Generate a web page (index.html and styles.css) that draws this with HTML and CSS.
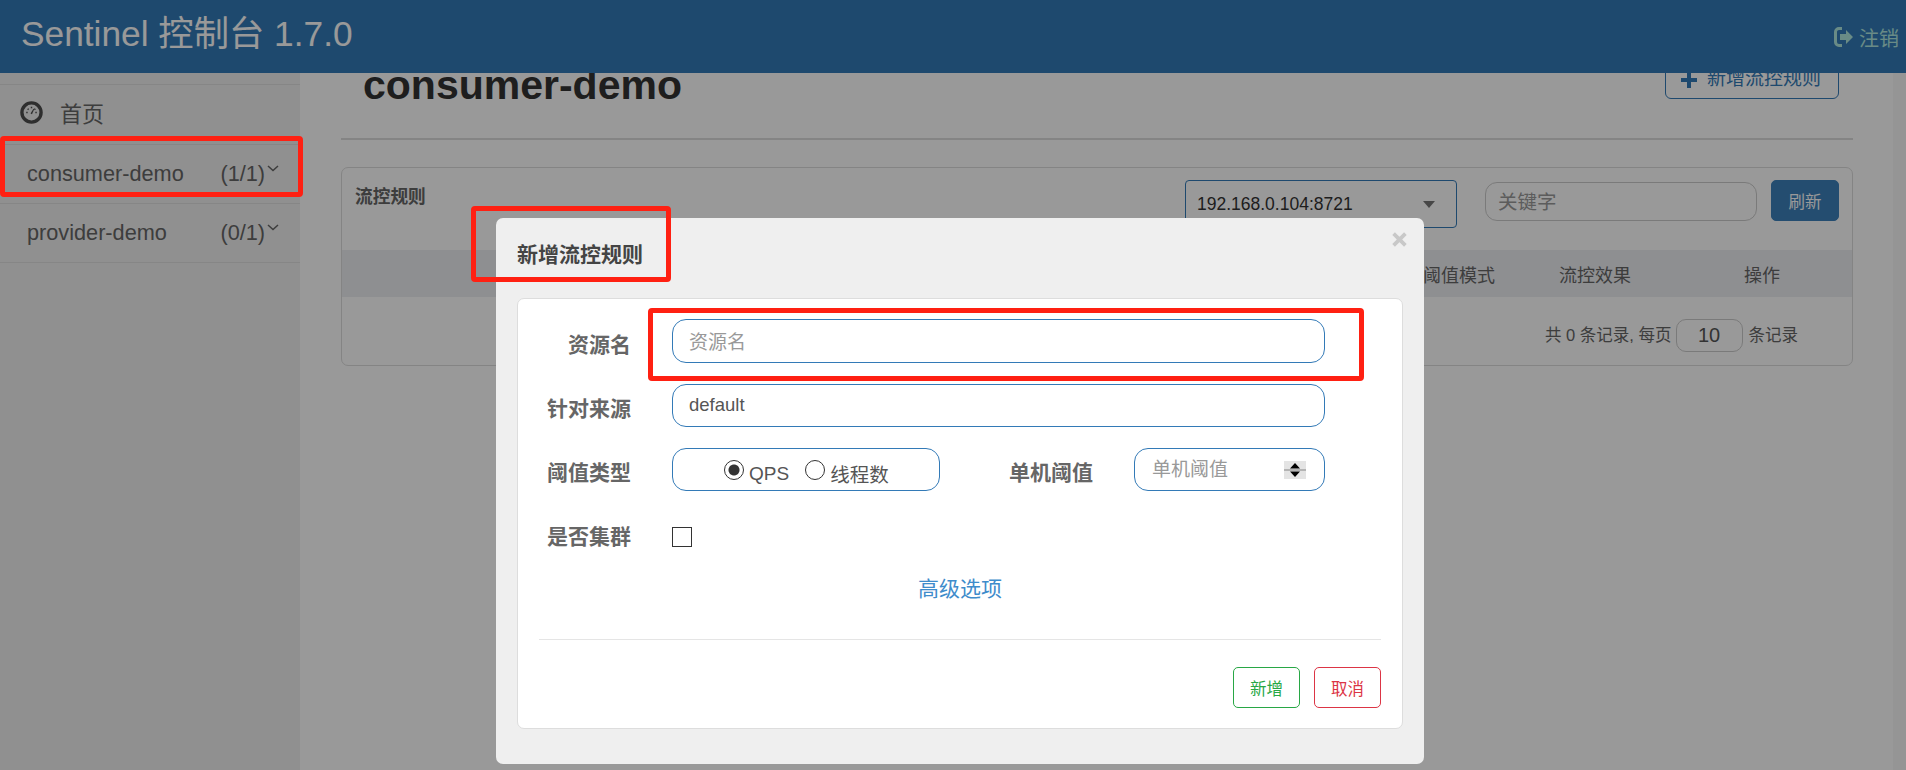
FILE: index.html
```html
<!DOCTYPE html>
<html lang="zh-CN">
<head>
  <meta charset="UTF-8" />
  <title>Sentinel 控制台</title>
  <link rel="stylesheet" href="styles.css">
</head>
<body>

  <!-- Top bar -->
  <header class="topbar">
    <span class="brand">Sentinel 控制台 1.7.0</span>
    <a class="logout">
      <svg class="logout-icon" viewBox="0 0 20 20"><path d="M8 1.500H5A3.500 3.500 0 0 0 1.500 5v10A3.500 3.500 0 0 0 5 18.500h3" fill="none" stroke="currentColor" stroke-width="3"/><path d="M6 7h6V3l7 7-7 7v-4H6z" fill="currentColor"/></svg>
      注销
    </a>
  </header>

  <div class="layout">
    <!-- Sidebar -->
    <aside class="sidebar">
      <div class="side-home">
        <svg class="home-icon" viewBox="0 0 24 24">
          <circle cx="12" cy="12" r="10" fill="none" stroke="currentColor" stroke-width="3.500"/>
          <path d="M6.500 12h1.500M8 8l1 1M12 6v1.500M16 8l-1 1M16 12h1.500" stroke="currentColor" stroke-width="1.500" fill="none"/>
          <path d="M11 13l3-5 .8.500-2.300 5.300z" fill="currentColor"/>
        </svg>
        <span>首页</span>
      </div>
      <div class="side-item">
        <span>consumer-demo</span>
        <span class="side-count">(1/1)<svg class="chevron" viewBox="0 0 12 7"><path d="M1 1l5 4.500L11 1" fill="none" stroke="currentColor" stroke-width="1.500"/></svg></span>
      </div>
      <div class="side-item">
        <span>provider-demo</span>
        <span class="side-count">(0/1)<svg class="chevron" viewBox="0 0 12 7"><path d="M1 1l5 4.500L11 1" fill="none" stroke="currentColor" stroke-width="1.500"/></svg></span>
      </div>
    </aside>

    <!-- Page behind the dialog -->
    <main class="content">
      <div class="page-head">
        <h1>consumer-demo</h1>
        <button class="add-btn">
          <svg class="plus-icon" viewBox="0 0 16 16"><path d="M6 0h4v6h6v4h-6v6H6v-6H0V6h6z" fill="currentColor"/></svg>
          新增流控规则
        </button>
      </div>

      <section class="panel">
        <div class="panel-bar">
          <span class="panel-title">流控规则</span>
          <div class="host-select">192.168.0.104:8721<i class="caret"></i></div>
          <input class="keyword" type="text" placeholder="关键字">
          <button class="refresh">刷新</button>
        </div>
        <div class="table-head">
          <span class="col-mode">阈值模式</span>
          <span class="col-effect">流控效果</span>
          <span class="col-ops">操作</span>
        </div>
        <div class="pager">
          <span class="pager-text">共 0 条记录, 每页</span>
          <input class="page-size" type="text" value="10">
          <span class="pager-text">条记录</span>
        </div>
      </section>
    </main>

    <div class="scroll-track"></div>
  </div>

  <!-- Add rule dialog -->
  <div class="backdrop">
    <div class="modal">
      <div class="modal-title">新增流控规则</div>
      <span class="close">
        <svg viewBox="0 0 14 14"><path d="M1.500 1.500l11 11M12.500 1.500l-11 11" stroke="currentColor" stroke-width="3.500" fill="none"/></svg>
      </span>
      <div class="card">
        <div class="row">
          <label class="field-label">资源名</label>
          <input class="field wide name-input" type="text" placeholder="资源名">
        </div>
        <div class="row row-2">
          <label class="field-label">针对来源</label>
          <input class="field wide" type="text" value="default">
        </div>
        <div class="row row-3">
          <label class="field-label">阈值类型</label>
          <div class="field radios">
            <input class="radio" type="radio" name="grade" checked><span class="radio-text">QPS</span>
            <input class="radio radio-second" type="radio" name="grade"><span class="radio-text radio-text-cn">线程数</span>
          </div>
          <label class="field-label label-count">单机阈值</label>
          <div class="field count">
            <input class="count-input" type="text" placeholder="单机阈值">
            <svg class="spinner" viewBox="0 0 22 18">
              <rect width="22" height="18" fill="#e4e4e4"/>
              <rect y="8" width="22" height="2" fill="#b4b4b4"/>
              <path d="M11 2l5 5.500H6zM11 16l-5-5.500h10z" fill="#000"/>
            </svg>
          </div>
        </div>
        <div class="row row-4">
          <label class="field-label">是否集群</label>
          <input class="check" type="checkbox">
        </div>
        <a class="advanced">高级选项</a>
        <div class="card-line"></div>
        <div class="actions">
          <button class="btn-ok">新增</button>
          <button class="btn-cancel">取消</button>
        </div>
      </div>
    </div>
  </div>

  <!-- Red annotation boxes drawn over the screenshot -->
  <div class="mark mark-menu"></div>
  <div class="mark mark-title"></div>
  <div class="mark mark-input"></div>

</body>
</html>
```

FILE: styles.css
```css
* {
  box-sizing: border-box;
}

html, body {
  height: 100%;
}

body {
  margin: 0;
  overflow: hidden;
  background: #fff;
  color: #333;
  font-family: "Liberation Sans", "Noto Sans CJK SC", sans-serif;
}

input, button {
  font-family: inherit;
}

/* top bar */
.topbar {
  position: fixed;
  top: 0;
  left: 0;
  right: 0;
  height: 73px;
  background: #337ab7;
  display: flex;
  justify-content: space-between;
  color: #fff;
  z-index: 1;
}

.brand {
  margin: 12px 0 0 21px;
  font-size: 35.300px;
  line-height: 44px;
}

.logout {
  display: flex;
  align-items: center;
  gap: 5px;
  height: 26px;
  margin: 24px 7px 0 0;
  font-size: 20px;
  color: #b0e8e0;
}

.logout-icon {
  width: 20px;
  height: 20px;
}

/* layout */
.layout {
  display: flex;
  height: 100%;
}

.sidebar {
  width: 300px;
  flex: none;
  padding-top: 84px;
  background: #f0f0f0;
  color: #666;
  font-size: 21.700px;
}

.side-home {
  height: 60px;
  border-top: 1px solid #e0e0e0;
  padding: 16px 0 0 20px;
  display: flex;
  align-items: flex-start;
  gap: 17px;
}

.home-icon {
  width: 23px;
  height: 23px;
  color: #4e4e4e;
}

.side-home span {
  line-height: 30px;
  font-size: 22px;
  margin-top: -1px;
}

.side-item {
  height: 59px;
  border-top: 1px solid #e0e0e0;
  padding: 13px 0 0 27px;
  display: flex;
  justify-content: space-between;
  line-height: 32px;
}

.side-item:last-child {
  border-bottom: 1px solid #e0e0e0;
  height: 60px;
}

.side-count {
  display: flex;
  margin-right: 21px;
}

.chevron {
  width: 12px;
  height: 7px;
  margin: 7px 0 0 2px;
}

/* page behind the dialog */
.content {
  flex: 1;
  min-width: 0;
  padding: 49px 40px 0 41px;
}

.scroll-track {
  width: 13px;
  flex: none;
  background: #f8f8f8;
}

.page-head {
  height: 91px;
  display: flex;
  justify-content: space-between;
  align-items: flex-start;
  border-bottom: 2px solid #ddd;
}

.page-head h1 {
  margin: 11px 0 0 22px;
  font-size: 41px;
  line-height: 50px;
  color: #333;
}

.add-btn {
  width: 174px;
  height: 50px;
  margin-right: 14px;
  padding: 17px 0 0 15px;
  display: flex;
  align-items: flex-start;
  gap: 10px;
  background: #fff;
  border: 1px solid #337ab7;
  border-radius: 6px;
  color: #337ab7;
  font-size: 19px;
  line-height: 24px;
}

.plus-icon {
  width: 16px;
  height: 16px;
  margin-top: 5px;
}

.panel {
  height: 199px;
  margin-top: 27px;
  border: 1px solid #ddd;
  border-radius: 7px;
}

.panel-bar {
  height: 82px;
  padding: 12px 13px 0 13px;
  display: flex;
  align-items: flex-start;
}

.panel-title {
  margin: 5px auto 0 0;
  font-size: 17.700px;
  font-weight: bold;
  line-height: 24px;
  color: #666;
}

.host-select {
  width: 272px;
  height: 48px;
  padding: 0 21px 0 11px;
  display: flex;
  align-items: center;
  justify-content: space-between;
  border: 1px solid #337ab7;
  border-radius: 4px;
  font-size: 17.500px;
  color: #333;
}

.caret {
  border-top: 7px solid #777;
  border-left: 6px solid transparent;
  border-right: 6px solid transparent;
}

.keyword {
  width: 272px;
  height: 39px;
  margin: 2px 0 0 28px;
  padding: 2px 12px 0;
  border: 1px solid #ccc;
  border-radius: 12px;
  font-size: 19.500px;
  outline: none;
}

.keyword::placeholder {
  color: #999;
}

.refresh {
  width: 68px;
  height: 41px;
  margin-left: 14px;
  background: #3d81bb;
  border: 1px solid #3d81bb;
  border-radius: 5px;
  color: #fff;
  font-size: 16.500px;
}

.table-head {
  height: 47px;
  background: #edeef2;
  display: flex;
  justify-content: flex-end;
  align-items: center;
  font-size: 18px;
  color: #666;
}

.table-head span {
  text-align: center;
}

.col-mode {
  width: 118px;
}

.col-effect {
  width: 154px;
}

.col-ops {
  width: 180px;
}

.pager {
  margin-top: 22px;
  padding-right: 54px;
  display: flex;
  justify-content: flex-end;
  align-items: center;
  gap: 5px;
  font-size: 16.500px;
  color: #666;
}

.pager-text {
  margin-bottom: 4px;
}

.page-size {
  width: 67px;
  height: 33px;
  margin: 0 1px 0 -1px;
  padding: 0;
  border: 1px solid #ccc;
  border-radius: 10px;
  text-align: center;
  font-size: 20px;
  color: #555;
}

/* dialog */
.backdrop {
  position: fixed;
  inset: 0;
  background: rgba(0, 0, 0, 0.4);
  padding: 218px 0 0 496px;
  z-index: 2;
}

.modal {
  position: relative;
  width: 928px;
  height: 546px;
  padding: 0 21px;
  background: #efefef;
  border-radius: 7px;
}

.modal-title {
  height: 80px;
  padding-top: 21px;
  font-size: 21px;
  font-weight: bold;
  line-height: 32px;
  color: #444;
}

.close {
  position: absolute;
  top: 14px;
  right: 17px;
  width: 15px;
  height: 15px;
  color: #c8c8c8;
}

.close svg {
  display: block;
}

.card {
  width: 886px;
  height: 431px;
  padding: 20px 21px 0 0;
  background: #fff;
  border: 1px solid #ddd;
  border-radius: 7px;
}

.row {
  display: flex;
  align-items: center;
  height: 44px;
}

.row-2,
.row-3 {
  height: 43px;
  margin-top: 21px;
}

.row-4 {
  height: 22px;
  margin-top: 35px;
}

.row-4 .field-label {
  padding-top: 0;
  margin-bottom: 5px;
}

.field-label {
  flex: none;
  width: 113px;
  margin-right: 41px;
  padding-top: 3px;
  text-align: right;
  font-size: 21px;
  font-weight: bold;
  color: #666;
}

.field {
  height: 100%;
  background: #fff;
  border: 1px solid #337ab7;
  border-radius: 14px;
  font-size: 18.500px;
  color: #555;
  outline: none;
}

.wide {
  width: 653px;
  padding: 0 16px 1px;
}

.name-input {
  padding: 3px 16px 0;
}

.wide::placeholder {
  font-size: 19px;
}

.field::placeholder,
.count-input::placeholder {
  color: #999;
}

.radios {
  width: 268px;
  padding-left: 51px;
  display: flex;
  align-items: center;
  font-size: 19px;
}

.radio {
  appearance: none;
  flex: none;
  width: 20px;
  height: 20px;
  margin: 0;
  border: 1px solid #333;
  border-radius: 50%;
  background: #fff;
}

.radio:checked {
  background: radial-gradient(circle, #333 0 5px, #fff 6px);
}

.radio-text {
  margin: 8px 0 0 5px;
}

.radio-second {
  margin-left: 16px;
}

.radio-text-cn {
  font-size: 19.500px;
}

.label-count {
  width: 153px;
}

.count {
  width: 191px;
  padding: 0 18px 0 17px;
  display: flex;
  align-items: center;
  justify-content: space-between;
}

.count-input {
  width: 120px;
  padding: 0;
  border: none;
  outline: none;
  font-size: 19px;
}

.spinner {
  width: 22px;
  height: 18px;
  flex: none;
}

.check {
  appearance: none;
  width: 20px;
  height: 20px;
  margin: 0;
  border: 1px solid #333;
  background: #fff;
}

.advanced {
  display: block;
  margin-top: 28px;
  padding-left: 400px;
  font-size: 21px;
  line-height: 26px;
  color: #3f8ccb;
}

.card-line {
  height: 1px;
  margin: 37px 0 0 21px;
  background: #e5e5e5;
}

.actions {
  margin-top: 27px;
  display: flex;
  justify-content: flex-end;
  gap: 14px;
}

.actions button {
  width: 67px;
  height: 41px;
  padding: 0;
  background: #fff;
  border-radius: 5px;
  font-size: 16.500px;
}

.btn-ok {
  border: 1px solid #28a745;
  color: #28a745;
}

.btn-cancel {
  border: 1px solid #dc3545;
  color: #dc3545;
}

/* red annotation boxes */
.mark {
  position: fixed;
  border: 5px solid #ff2012;
  border-radius: 4px;
  z-index: 3;
}

.mark-menu {
  left: 0;
  top: 136px;
  width: 303px;
  height: 61px;
}

.mark-title {
  left: 471px;
  top: 206px;
  width: 200px;
  height: 76px;
}

.mark-input {
  left: 648px;
  top: 308px;
  width: 716px;
  height: 73px;
}
```
